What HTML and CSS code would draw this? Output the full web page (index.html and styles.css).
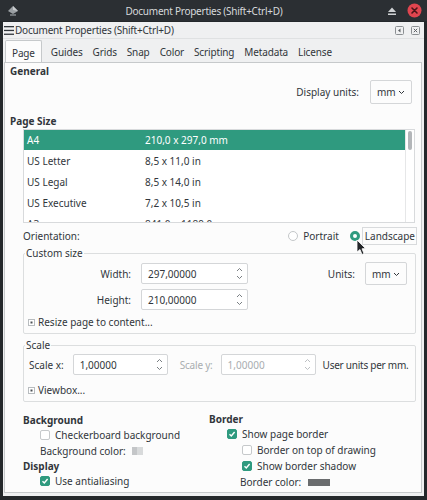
FILE: index.html
```html
<!DOCTYPE html>
<html>
<head>
<meta charset="utf-8">
<link rel="stylesheet" href="styles.css">
</head>
<body>
<div class="window">
  <div class="titlebar">
    <svg class="app-icon" width="12" height="12" viewBox="0 0 12 12"><path d="M6 1 L11 6 L6 9 L1 6 Z" fill="#9a9fa3"/><path d="M6 1 L11 6 L6 5 Z" fill="#c8cbcd"/><rect x="3" y="9" width="6" height="2" fill="#6d7276"/></svg>
    <div class="title">Document Properties (Shift+Ctrl+D)</div>
    <svg class="tb-eject" width="10" height="10" viewBox="0 0 10 10"><path d="M5 1.5 L9 6 L1 6 Z" fill="#d0d3d5"/><rect x="1" y="7.5" width="8" height="1.5" fill="#d0d3d5"/></svg>
    <svg class="tb-close" width="15" height="15" viewBox="0 0 15 15"><circle cx="7.5" cy="7.5" r="7" fill="#e0454f"/><path d="M5 5 L10 10 M10 5 L5 10" stroke="#4a1418" stroke-width="1.6" stroke-linecap="round"/></svg>
  </div>
  <div class="client">
    <div class="dock-header">
      <svg class="hamburger" width="10" height="9" viewBox="0 0 10 9"><rect x="0" y="0" width="10" height="1.3" fill="#31363b"/><rect x="0" y="3.8" width="10" height="1.3" fill="#31363b"/><rect x="0" y="7.6" width="10" height="1.3" fill="#31363b"/></svg>
      <span class="dock-title">Document Properties (Shift+Ctrl+D)</span>
      <span class="dock-btns">
        <svg width="9" height="9" viewBox="0 0 9 9"><rect x="0.5" y="0.5" width="8" height="8" rx="1" fill="none" stroke="#8b8f92"/><path d="M5.5 2.5 L3 4.5 L5.5 6.5 Z" fill="#5c6064"/></svg>
        <svg width="9" height="9" viewBox="0 0 9 9"><rect x="0.5" y="0.5" width="8" height="8" rx="1" fill="none" stroke="#8b8f92"/><path d="M2.8 2.8 L6.2 6.2 M6.2 2.8 L2.8 6.2" stroke="#5c6064" stroke-width="1"/></svg>
      </span>
    </div>
    <div class="tabs">
      <span class="tab active">Page</span>
      <span class="tab">Guides</span>
      <span class="tab">Grids</span>
      <span class="tab">Snap</span>
      <span class="tab">Color</span>
      <span class="tab">Scripting</span>
      <span class="tab">Metadata</span>
      <span class="tab">License</span>
    </div>
    <div class="panel">
      <div class="heading">General</div>
      <div class="units-row">
        <span>Display units:</span>
        <span class="combo combo-display">mm <svg class="chev" width="7" height="5" viewBox="0 0 7 5"><path d="M1 1 L3.5 3.5 L6 1" fill="none" stroke="#31363b" stroke-width="1"/></svg></span>
      </div>
      <div class="heading heading-size">Page Size</div>
      <div class="list">
        <div class="rows">
          <div class="row selected"><span class="c1">A4</span><span>210,0 x 297,0 mm</span></div>
          <div class="row"><span class="c1">US Letter</span><span>8,5 x 11,0 in</span></div>
          <div class="row"><span class="c1">US Legal</span><span>8,5 x 14,0 in</span></div>
          <div class="row"><span class="c1">US Executive</span><span>7,2 x 10,5 in</span></div>
          <div class="row"><span class="c1">A3</span><span>841,0 x 1189,0 mm</span></div>
        </div>
        <div class="scrollbar"><div class="thumb"></div></div>
      </div>
      <div class="orient-row">
        <span>Orientation:</span>
        <span class="orient-opts">
          <span class="radio"></span><span class="opt-label">Portrait</span>
          <span class="radio checked"></span><span class="opt-label focus">Landscape</span>
        </span>
      </div>
      <fieldset class="group group-custom">
        <legend>Custom size</legend>
        <div class="size-row">
          <span class="lbl">Width:</span>
          <span class="spin spin-size"><span>297,00000</span><svg class="arrows" width="7" height="13" viewBox="0 0 7 13"><path d="M1 4 L3.5 1.5 L6 4 M1 9 L3.5 11.5 L6 9" fill="none" stroke="#6b7075" stroke-width="0.9"/></svg></span>
          <span class="fill"></span>
          <span>Units:</span>
          <span class="combo combo-units">mm <svg class="chev" width="7" height="5" viewBox="0 0 7 5"><path d="M1 1 L3.5 3.5 L6 1" fill="none" stroke="#31363b" stroke-width="1"/></svg></span>
        </div>
        <div class="size-row size-row2">
          <span class="lbl">Height:</span>
          <span class="spin spin-size"><span>210,00000</span><svg class="arrows" width="7" height="13" viewBox="0 0 7 13"><path d="M1 4 L3.5 1.5 L6 4 M1 9 L3.5 11.5 L6 9" fill="none" stroke="#6b7075" stroke-width="0.9"/></svg></span>
        </div>
        <div class="expander expander-resize"><svg width="7" height="7" viewBox="0 0 7 7"><rect x="0.5" y="0.5" width="6" height="6" fill="#fff" stroke="#b8bcbf"/><rect x="2.5" y="2.5" width="2" height="2" fill="#4d5256"/></svg><span>Resize page to content...</span></div>
      </fieldset>
      <fieldset class="group group-scale">
        <legend>Scale</legend>
        <div class="scale-row">
          <span class="nw">Scale x:</span>
          <span class="spin spin-scale"><span>1,00000</span><svg class="arrows" width="7" height="13" viewBox="0 0 7 13"><path d="M1 4 L3.5 1.5 L6 4 M1 9 L3.5 11.5 L6 9" fill="none" stroke="#6b7075" stroke-width="0.9"/></svg></span>
          <span class="nw disabled scale-y">Scale y:</span>
          <span class="spin spin-scale spin-y disabled"><span>1,00000</span><svg class="arrows" width="7" height="13" viewBox="0 0 7 13"><path d="M1 4 L3.5 1.5 L6 4 M1 9 L3.5 11.5 L6 9" fill="none" stroke="#b5b9bc" stroke-width="0.9"/></svg></span>
          <span class="nw per-mm">User units per mm.</span>
        </div>
        <div class="expander expander-viewbox"><svg width="7" height="7" viewBox="0 0 7 7"><rect x="0.5" y="0.5" width="6" height="6" fill="#fff" stroke="#b8bcbf"/><rect x="2.5" y="2.5" width="2" height="2" fill="#4d5256"/></svg><span>Viewbox...</span></div>
      </fieldset>
      <div class="bottom">
        <div class="col col-left">
          <div class="heading">Background</div>
          <div class="check-row ind1"><span class="check"></span>Checkerboard background</div>
          <div class="color-row ind1">Background color: <span class="swatch-bg"></span></div>
          <div class="heading heading-display">Display</div>
          <div class="check-row ind1"><span class="check on"><svg width="8" height="8" viewBox="0 0 8 8"><path d="M1.5 4.2 L3.3 6 L6.6 2" fill="none" stroke="#fff" stroke-width="1.4"/></svg></span>Use antialiasing</div>
        </div>
        <div class="col col-right">
          <div class="heading">Border</div>
          <div class="check-row r1"><span class="check on"><svg width="8" height="8" viewBox="0 0 8 8"><path d="M1.5 4.2 L3.3 6 L6.6 2" fill="none" stroke="#fff" stroke-width="1.4"/></svg></span>Show page border</div>
          <div class="check-row r2"><span class="check"></span>Border on top of drawing</div>
          <div class="check-row r2"><span class="check on"><svg width="8" height="8" viewBox="0 0 8 8"><path d="M1.5 4.2 L3.3 6 L6.6 2" fill="none" stroke="#fff" stroke-width="1.4"/></svg></span>Show border shadow</div>
          <div class="color-row r3">Border color: <span class="swatch-border"></span></div>
        </div>
      </div>
    </div>
  </div>
  <svg class="cursor" width="10" height="17" viewBox="0 0 10 17"><path d="M1 1 L1 13 L4 10.5 L6 15.5 L8 14.6 L6 9.8 L9.5 9.5 Z" fill="#232629" stroke="#ffffff" stroke-width="0.8"/></svg>
</div>
</body>
</html>
```
FILE: styles.css
```css
* { box-sizing: border-box; }
html, body { margin: 0; padding: 0; }
body {
  background: #24282b;
  font-family: "Noto Sans", "Open Sans", sans-serif;
  font-size: 10px;
  color: #31363b;
}
.window {
  position: relative;
  width: 427px;
  height: 500px;
  background: #24282b;
  overflow: hidden;
}
.titlebar {
  height: 21px;
  display: flex;
  align-items: center;
  padding: 0 5px 0 6px;
  background: #2b2f33;
  color: #d6d9db;
}
.app-icon { margin-left: 1px; }
.title {
  flex: 1;
  text-align: center;
  font-size: 10px;
  letter-spacing: -0.25px;
  margin-left: 2px;
}
.tb-eject { margin-right: 10px; }
.tb-close { margin-right: 0; }

.client {
  margin: 1px 3px 0 3px;
  height: 474px;
  background: #eff0f1;
  display: flex;
  flex-direction: column;
}
.dock-header {
  height: 17px;
  display: flex;
  align-items: center;
  padding: 0 4px 0 1px;
  border-bottom: 1px solid #dfe1e2;
}
.hamburger { margin-right: 1px; }
.dock-title { letter-spacing: -0.2px; flex: 1; }
.dock-btns { display: flex; gap: 7px; }

.tabs {
  margin-top: 1px;
  height: 22px;
  display: flex;
  align-items: stretch;
  padding-left: 2px;
}
.tab {
  display: flex;
  align-items: center;
  padding: 2px 5px 0 5px;
  letter-spacing: -0.15px;
}
.tab.active {
  background: #fcfcfc;
  border: 1px solid #c6c9cb;
  border-bottom: none;
  border-radius: 2px 2px 0 0;
  padding: 2px 6px 0 6px;
  margin-right: 4px;
}

.panel {
  margin: 0 2px 0 1px;
  height: 431px;
  background: #fcfcfc;
  border: 1px solid #c6c9cb;
  padding: 0 9px 0 5px;
  display: flex;
  flex-direction: column;
}
.heading {
  font-weight: bold;
  line-height: 14px;
  height: 14px;
  margin-top: 1px;
}
.units-row {
  margin-top: 2px;
  height: 24px;
  display: flex;
  align-items: center;
  justify-content: flex-end;
  gap: 11px;
}
.combo {
  display: inline-flex;
  align-items: center;
  justify-content: space-between;
  border: 1px solid #d4d6d8;
  border-radius: 2px;
  background: #fcfcfc;
  padding: 0 6px 0 6px;
}
.combo-display { width: 42px; height: 24px; }
.chev { margin-top: 1px; }

.heading-size { margin-top: 10px; }
.list {
  margin: 1px 0 0 13px;
  width: 392px;
  height: 94px;
  border: 1px solid #d8dadc;
  display: flex;
  overflow: hidden;
  background: #fff;
}
.rows { flex: 1; }
.row {
  height: 21px;
  display: flex;
  align-items: center;
  padding-left: 3px;
}
.row.selected { background: #2f9a7f; color: #fff; height: 20px; }
.c1 { width: 118px; }
.scrollbar {
  width: 9px;
  border-left: 1px solid #e6e7e8;
  padding: 1px 2px 0 2px;
}
.thumb { width: 4px; height: 19px; border-radius: 2px; background: #b3b6b9; }

.orient-row {
  margin: 3px 0 0 13px;
  height: 19px;
  display: flex;
  align-items: center;
}
.orient-opts {
  margin-left: auto;
  display: flex;
  align-items: center;
  margin-right: -5px;
}
.radio {
  width: 10px;
  height: 10px;
  border-radius: 50%;
  border: 1px solid #c4c7c9;
  background: #fff;
  margin-right: 5px;
}
.radio.checked {
  border: 3px solid #2f9a7f;
  background: #fff;
  margin-left: 11px;
}
.opt-label.focus {
  border: 1px solid #d8dadc;
  padding: 1px 1px 1px 2px;
  margin-left: -3px;
}

fieldset.group {
  margin: 2px 0 0 13px;
  padding: 0;
  width: 393px;
  border: 1px solid #dcdedf;
  border-radius: 2px;
  min-width: 0;
}
fieldset.group legend {
  padding: 0 1px;
  margin-left: 1px;
  line-height: 12px;
  font-size: 10px;
}
.group-custom { height: 87px; }
.size-row {
  margin-top: 3px;
  display: flex;
  align-items: center;
  height: 23px;
}
.size-row2 { margin-top: 3px; }
.lbl { width: 107px; text-align: right; margin-right: 10px; }
.spin {
  display: inline-flex;
  align-items: center;
  justify-content: space-between;
  border: 1px solid #d4d6d8;
  border-radius: 2px;
  background: #fff;
  padding: 0 4px 0 6px;
  flex-shrink: 0;
}
.spin-size { width: 107px; height: 21px; }
.fill { flex: 1; }
.combo-units { width: 42px; height: 23px; margin-left: 10px; margin-right: 8px; }
.expander {
  display: flex;
  align-items: center;
  gap: 3px;
  margin-left: 4px;
  height: 16px;
}
.expander-resize { margin-top: 3px; }

.group-scale { margin-top: 5px !important; height: 63px; }
.scale-row {
  display: flex;
  align-items: center;
  height: 21px;
  margin-top: 3px;
  padding-left: 5px;
}
.nw { white-space: nowrap; flex-shrink: 0; }
.spin-scale { width: 95px; height: 21px; margin-left: 9px; }
.spin-y { margin-left: 8px; }
.disabled { color: #a9adb0; }
.scale-y { margin-left: 12px; letter-spacing: -0.2px; }
.per-mm { margin-left: 7px; letter-spacing: -0.25px; }
.expander-viewbox { margin-top: 7px; }

.bottom {
  display: flex;
  margin: 10px 0 0 13px;
}
.col-left { width: 186px; }
.col-right .heading { margin-top: 0; }
.check-row, .color-row {
  display: flex;
  align-items: center;
  height: 16px;
  white-space: nowrap;
}
.ind1 { padding-left: 17px; }
.check {
  width: 10px;
  height: 10px;
  border: 1px solid #c6c9cb;
  border-radius: 2px;
  background: #fff;
  margin-right: 5px;
  display: inline-flex;
  align-items: center;
  justify-content: center;
}
.check.on { background: #2f9a7f; border-color: #2f9a7f; }
.heading-display { margin-top: 0; }
.swatch-bg {
  display: inline-block;
  width: 11px;
  height: 8px;
  margin-left: 6px;
  background: linear-gradient(90deg, #c4c6c8 50%, #d8dadb 50%);
}
.r1 { padding-left: 18px; }
.r2 { padding-left: 33px; }
.r3 { padding-left: 31px; }
.swatch-border {
  display: inline-block;
  width: 22px;
  height: 7px;
  margin-left: 7px;
  background: #6a6c6e;
}

.cursor {
  position: absolute;
  left: 356px;
  top: 239px;
}
```
